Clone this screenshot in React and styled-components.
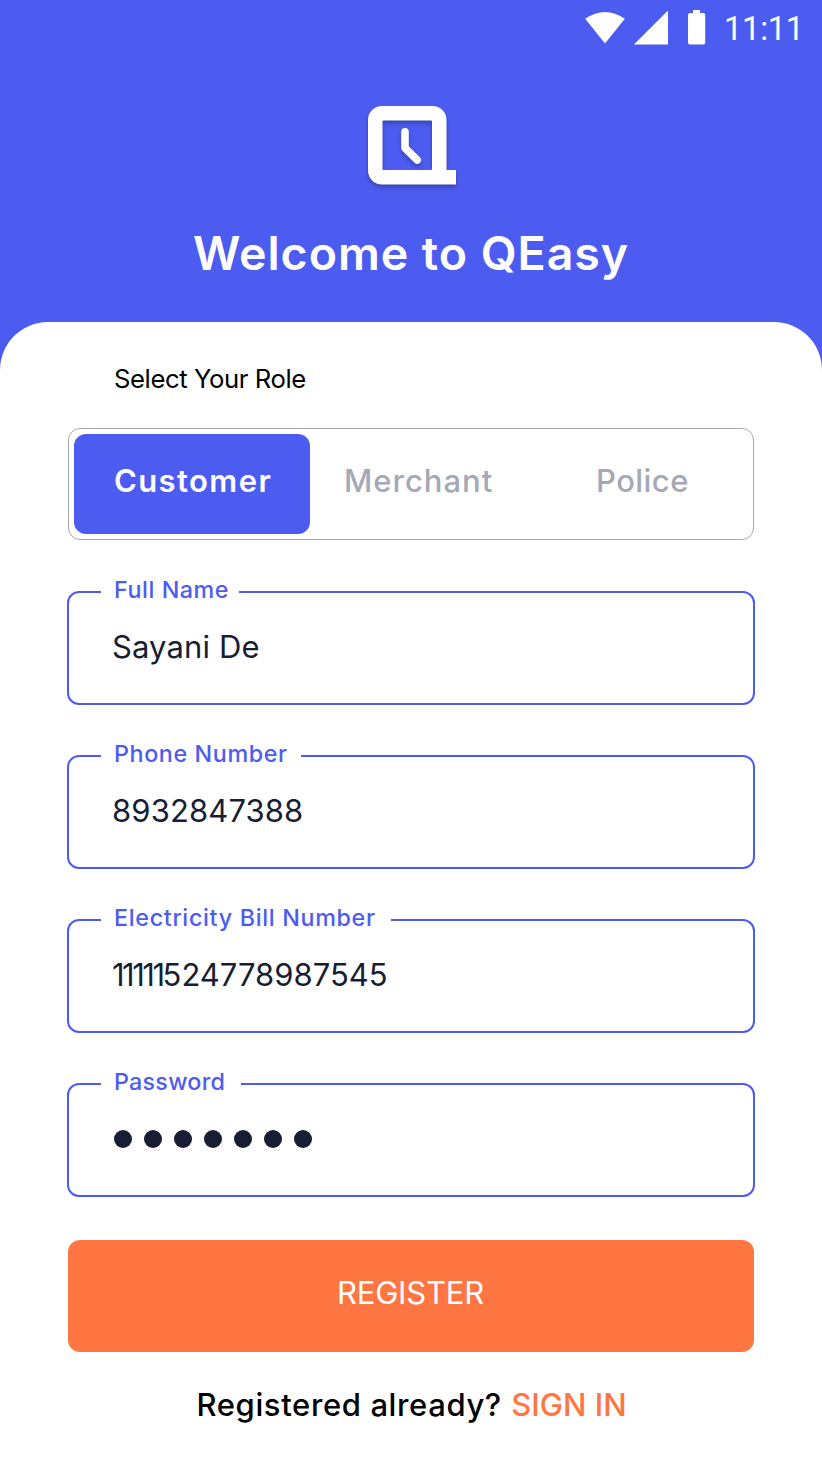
import React from "react";
import styled, { createGlobalStyle } from "styled-components";

const blue = "#4d5cf0";
const orange = "#ff7643";
const ink = "#171d33";
const grey = "#a5a9b5";

const GlobalStyle = createGlobalStyle`
  *, *::before, *::after { box-sizing: border-box; }
  body { margin: 0; background: ${blue}; font-family: Inter, "Liberation Sans", sans-serif; }
`;

const Screen = styled.div`
  width: 822px;
  height: 1462px;
  display: flex;
  flex-direction: column;
  background: ${blue};
  overflow: hidden;
`;

const StatusBar = styled.div`
  height: 56px;
  flex: none;
  display: flex;
  justify-content: flex-end;
  padding-right: 22px;
  color: #fff;
`;

const StatusIcons = styled.svg`
  width: 122px;
  height: 56px;
  flex: none;
`;

const Clock = styled.time`
  width: 76px;
  margin-left: 18px;
  font: 400 32.5px/58px Roboto, sans-serif;
  letter-spacing: -0.2px;
  white-space: nowrap;
`;

const Brand = styled.header`
  height: 266px;
  flex: none;
  display: flex;
  flex-direction: column;
  align-items: center;
  padding-top: 44px;
`;

const Logo = styled.svg`
  width: 100px;
  height: 96px;
  flex: none;
`;

const Text = styled.span`
  display: block;
  white-space: nowrap;
  font-size: ${(p) => p.$size}px;
  font-weight: ${(p) => p.$weight || 400};
  line-height: 40px;
  letter-spacing: ${(p) => p.$track || 0}px;
  color: ${(p) => p.$color || "inherit"};
`;

const TightDigits = styled.span`
  letter-spacing: -2.5px;
`;

const Title = styled.h1`
  margin: 27px 0 0;
  width: 436px;
  font-size: 46.5px;
  font-weight: 600;
  line-height: 60px;
  letter-spacing: 0.95px;
  color: #fff;
  white-space: nowrap;
`;

const Sheet = styled.main`
  flex: 1;
  padding: 37px 67px 0;
  border-radius: 48px 48px 0 0;
  background: #fff;
`;

const RoleLabel = styled.div`
  padding-left: 47px;
  height: 40px;
`;

const Tabs = styled.div`
  display: grid;
  grid-template-columns: 236px 216px 1fr;
  width: 686px;
  height: 112px;
  margin: 29px 1px 40px;
  padding: 5px;
  border: 1px solid ${grey};
  border-radius: 12px;
`;

const Tab = styled.div`
  padding: 27px 0 0 ${(p) => p.$inset}px;
  border-radius: 12px;
  background: ${(p) => (p.$active ? blue : "transparent")};
`;

const Field = styled.fieldset`
  min-width: 0;
  height: 125px;
  margin: 0 0 39px;
  padding: 0 0 0 43px;
  border: 2px solid ${blue};
  border-radius: 12px;
`;

const Legend = styled.legend`
  width: ${(p) => p.$width}px;
  height: 24px;
  margin-left: -11px;
  padding: 0 0 0 13px;

  ${Text} { line-height: 19px; }
`;

const Value = styled.div`
  padding-top: 23px;
`;

const Dots = styled.div`
  display: flex;
  gap: 12px;
  padding: 34px 0 0 2px;
`;

const Dot = styled.i`
  width: 18px;
  height: 18px;
  border-radius: 50%;
  background: ${ink};
`;

const RegisterButton = styled.button`
  display: block;
  width: 686px;
  height: 112px;
  margin: 43px 1px 0;
  padding: 0 0 6px 269px;
  border: 0;
  border-radius: 12px;
  background: ${orange};
  color: #fff;
  font-family: inherit;
  text-align: left;
`;

const Footer = styled.p`
  display: flex;
  margin: 33px 0 0 129.5px;

  ${Text} + ${Text} { margin-left: 9.5px; }
`;

const fields = [
  { label: "Full Name", gap: 138, labelTrack: 0.55, value: "Sayani De", track: 0.12 },
  { label: "Phone Number", gap: 200, labelTrack: 0.6, value: "8932847388", track: 0.12 },
  { label: "Electricity Bill Number", gap: 290, labelTrack: 0.68, tight: "11111", value: "524778987545", track: 0 },
  { label: "Password", gap: 140, labelTrack: 0.25, dots: 7 },
];

const roles = [
  { name: "Customer", inset: 40, weight: 600, color: "#fff", track: 1.4, active: true },
  { name: "Merchant", inset: 34, weight: 500, color: grey, track: 1 },
  { name: "Police", inset: 70, weight: 500, color: grey, track: 0.45 },
];

export default function App() {
  return (
    <Screen>
      <GlobalStyle />
      <StatusBar>
        <StatusIcons viewBox="584 0 122 56" fill="currentColor">
          <path d="M585.2 18.8Q605 5.2 624.8 18.8L605 43.6Z" />
          <path d="M634 44.5L668 10.5V44.5Z" />
          <path d="M693 10h7v3h3.200q2 0 2 2v27.500q0 2-2 2h-13.200q-2 0-2-2v-27.500q0-2 2-2h3Z" />
        </StatusIcons>
        <Clock>11:11</Clock>
      </StatusBar>
      <Brand>
        <Logo viewBox="361 100 100 96" fill="none">
          <g style={{ filter: "drop-shadow(0 3px 2px rgba(0,0,0,.25))" }}>
            <path
              fill="#fff"
              fillRule="evenodd"
              d="M382 106H432.500A14 14 0 0 1 446.500 120V170H456V184.500H382A14 14 0 0 1 368 170.500V120A14 14 0 0 1 382 106ZM383.500 120.500Q382.500 120.500 382.500 121.500V169Q382.500 170 383.500 170H431Q432 170 432 169V121.500Q432 120.500 431 120.500Z"
            />
            <path
              d="M405 131.800V148L417.200 160"
              stroke="#fff"
              strokeWidth="7.600"
              strokeLinecap="round"
              strokeLinejoin="round"
            />
          </g>
        </Logo>
        <Title>Welcome to QEasy</Title>
      </Brand>
      <Sheet>
        <RoleLabel>
          <Text $size={25.7} $track={-0.43} $color="#000">Select Your Role</Text>
        </RoleLabel>
        <Tabs>
          {roles.map((r) => (
            <Tab key={r.name} $inset={r.inset} $active={r.active}>
              <Text $size={31} $weight={r.weight} $color={r.color} $track={r.track}>{r.name}</Text>
            </Tab>
          ))}
        </Tabs>
        {fields.map((f) => (
          <Field key={f.label}>
            <Legend $width={f.gap}>
              <Text $size={23.3} $weight={500} $color={blue} $track={f.labelTrack}>{f.label}</Text>
            </Legend>
            {f.dots ? (
              <Dots>{Array.from({ length: f.dots }, (_, i) => <Dot key={i} />)}</Dots>
            ) : (
              <Value>
                <Text $size={31} $color={ink} $track={f.track}>
                  {f.tight && <TightDigits>{f.tight}</TightDigits>}
                  {f.value}
                </Text>
              </Value>
            )}
          </Field>
        ))}
        <RegisterButton>
          <Text $size={31} $track={-0.2}>REGISTER</Text>
        </RegisterButton>
        <Footer>
          <Text $size={31} $weight={500} $color="#000" $track={0.62}>Registered already?</Text>
          <Text $size={31} $weight={500} $color={orange}>SIGN IN</Text>
        </Footer>
      </Sheet>
    </Screen>
  );
}
